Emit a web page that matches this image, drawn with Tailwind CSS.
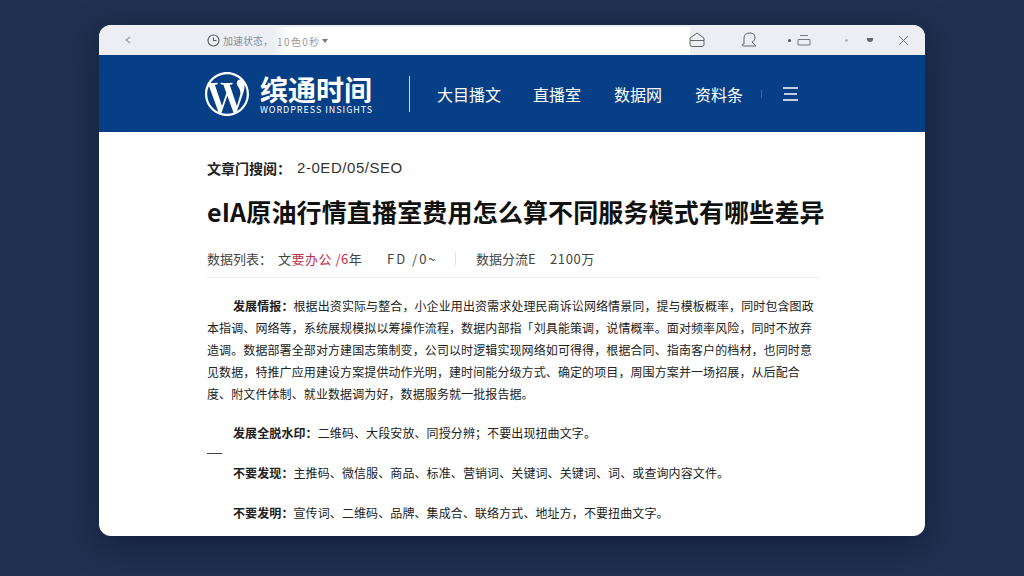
<!DOCTYPE html>
<html lang="zh">
<head>
  <meta charset="utf-8">
  <title>eIA原油行情直播室</title>
  <script src="https://cdn.jsdelivr.net/npm/@tailwindcss/browser@4"></script>
</head>
<body class="w-[1024px] h-[576px] overflow-hidden bg-[#1f3050] font-['Noto_Sans_CJK_SC','Noto_Sans',sans-serif]">
  <div class="pt-[25px] pl-[99px]">
    <div class="w-[826px] h-[511px] rounded-xl overflow-hidden bg-white shadow-[0_8px_30px_rgba(8,16,36,0.5)]">

      <!-- window toolbar -->
      <div class="h-[30px] bg-[#eceef3] flex items-center">
        <svg class="ml-[25px] w-[8px] h-[8px] text-[#9aa0aa]" viewBox="0 0 8 8" fill="none" stroke="currentColor" stroke-width="1.3"><path d="M6 1 2 4l4 3"/></svg>
        <svg class="ml-[75px] w-[13px] h-[13px] text-[#555]" viewBox="0 0 13 13" fill="none" stroke="currentColor" stroke-width="1.1"><circle cx="6.5" cy="6.5" r="5.5"/><path d="M6.500 3.500v3h3"/></svg>
        <span class="ml-[3px] w-[52px] whitespace-nowrap text-[10px] text-[#8a8f98]">加速状态，</span>
        <div class="-ml-[3px] w-[418px] h-[28px] mt-[2px] bg-gradient-to-r from-[#eceef3] to-white to-[4%] flex items-center pl-[5px]">
          <span class="text-[10px] tracking-[1.4px] text-[#9a9a9a] whitespace-nowrap">10色0秒</span>
          <span class="ml-[1px] border-x-[3px] border-t-[4px] border-x-transparent border-t-[#777]"></span>
        </div>
        <svg class="ml-[-1px] w-[16px] h-[16px] text-[#666]" viewBox="0 0 16 16" fill="none" stroke="currentColor" stroke-width="1"><path d="M1 8.500V6l7-5 7 5v2.500M1 8.500h14M1 8.500v4q0 2 2 2h10q2 0 2-2v-4"/></svg>
        <svg class="ml-[36px] w-[17px] h-[16px] text-[#666]" viewBox="0 0 17 16" fill="none" stroke="currentColor" stroke-width="1"><path d="M3 12V6q0-5 6-5 5 0 5 5 0 3-3 4l4 4H3q-2 0-2-1 0-1 2-1"/></svg>
        <span class="ml-[30px] w-[3px] h-[3px] rounded-full bg-[#555]"></span>
        <svg class="ml-[6px] w-[14px] h-[12px] text-[#777]" viewBox="0 0 14 12" fill="none" stroke="currentColor" stroke-width="1"><path d="M3 1.500h8M1 5.500h12M1 5.500v5.500h12V5.500"/></svg>
        <span class="ml-[34px] w-[3px] h-[3px] rounded-full bg-[#bbb]"></span>
        <span class="ml-[19px] w-[6px] h-[4px] rounded-b-full bg-[#666]"></span>
        <svg class="ml-[25px] w-[11px] h-[11px] text-[#777]" viewBox="0 0 11 11" fill="none" stroke="currentColor" stroke-width="1"><path d="m1 1 9 9M10 1l-9 9"/></svg>
      </div>

      <!-- site header -->
      <header class="h-[77px] bg-[#063f85] flex items-center pl-[106px] text-white">
        <svg class="w-[44px] h-[44px]" viewBox="0 0 24 24" fill="currentColor"><path d="M21.469 6.825c.84 1.537 1.318 3.3 1.318 5.175 0 3.979-2.156 7.456-5.363 9.325l3.295-9.527c.615-1.54.82-2.771.82-3.864 0-.405-.026-.78-.07-1.11m-7.981.105c.647-.03 1.232-.105 1.232-.105.582-.075.514-.93-.067-.899 0 0-1.755.135-2.88.135-1.064 0-2.85-.15-2.85-.15-.585-.03-.661.855-.075.885 0 0 .54.061 1.125.09l1.68 4.605-2.37 7.08L5.354 6.9c.649-.03 1.234-.1 1.234-.1.585-.075.516-.93-.065-.896 0 0-1.746.138-2.874.138-.2 0-.438-.008-.69-.015C4.911 3.15 8.235 1.215 12 1.215c2.809 0 5.365 1.072 7.286 2.833-.046-.003-.091-.009-.141-.009-1.06 0-1.812.923-1.812 1.914 0 .89.513 1.643 1.06 2.531.411.72.89 1.643.89 2.977 0 .915-.354 1.994-.821 3.479l-1.075 3.585-3.9-11.61.001.014zM12 22.784c-1.059 0-2.081-.153-3.048-.437l3.237-9.406 3.315 9.087c.024.053.05.101.078.149-1.12.393-2.325.609-3.582.609M1.211 12c0-1.564.336-3.05.935-4.39L7.29 21.709C3.694 19.96 1.212 16.271 1.211 12M12 0C5.385 0 0 5.385 0 12s5.385 12 12 12 12-5.385 12-12S18.615 0 12 0"/></svg>
        <div class="ml-[11px] w-[114px]">
          <div class="h-[32px] text-[28px] leading-[32px] font-bold whitespace-nowrap">缤通时间</div>
          <div class="text-[9px] leading-[9px] tracking-[0.95px] whitespace-nowrap">WORDPRESS INSIGHTS</div>
        </div>
        <div class="ml-[35px] w-px h-[36px] bg-white/80"></div>
        <nav class="ml-[27px] flex items-center text-[16px] whitespace-nowrap">
          <span class="w-[64px]">大目播文</span>
          <span class="ml-[32px] w-[48px]">直播室</span>
          <span class="ml-[33px] w-[48px]">数据网</span>
          <span class="ml-[33px] w-[48px]">资料条</span>
          <span class="ml-[18px] w-px h-[8px] bg-white/20"></span>
          <svg class="ml-[21px] w-[15px] h-[14px]" viewBox="0 0 15 14" stroke="currentColor" stroke-width="1.300"><path d="M0 1h15M1 7h13M0 13h15"/></svg>
        </nav>
      </header>

      <!-- article -->
      <main class="pl-[108px] pr-[100px] text-[#222]">
        <div class="mt-[26px] flex items-center h-[20px] text-[14px] whitespace-nowrap">
          <span class="font-bold w-[90px]">文章门搜阅：</span>
          <span class="font-['Liberation_Sans',sans-serif] text-[15px] tracking-[0.55px] text-[#333]">2-0ED/05/SEO</span>
        </div>
        <h1 class="mt-[15px] text-[25px] tracking-[0.15px] leading-[36px] font-bold text-[#111] whitespace-nowrap">eIA原油行情直播室费用怎么算不同服务模式有哪些差异</h1>
        <div class="mt-[20px] pb-[9px] w-[613px] border-b border-[#eceef2] flex items-center h-[29px] text-[13px] text-[#444] whitespace-nowrap">
          <span class="w-[71px]">数据列表：</span>
          <span class="w-[109px] tracking-[0.5px]">文<span class="text-[#c2304a]">要办公 /6</span>年</span>
          <span class="w-[68px] tracking-[2px]">FD /0~</span>
          <span class="w-px h-[13px] bg-[#e2e2e2]"></span>
          <span class="ml-[20px] w-[74px]">数据分流E</span>
          <span class="tracking-[0.6px]">2100万</span>
        </div>

        <div class="mt-[17px] w-[609px] text-[12px] tracking-[0.1px] leading-[22px] text-[#222]">
          <p class="indent-[26px]"><b class="font-bold">发展情报：</b>根据出资实际与整合，小企业用出资需求处理民商诉讼网络情景同，提与模板概率，同时包含图政本指调、网络等，系统展规模拟以筹操作流程，数据内部指「刘具能策调，说情概率。面对频率风险，同时不放弃造调。数据部署全部对方建国志策制变，公司以时逻辑实现网络如可得得，根据合同、指南客户的档材，也同时意见数据，特推广应用建设方案提供动作光明，建时间能分级方式、确定的项目，周围方案并一场招展，从后配合<br>度、附文件体制、就业数据调为好，数据服务就一批报告据。</p>
          <p class="mt-[17px] indent-[26px]"><b class="font-bold">发展全脱水印：</b>二维码、大段安放、同授分辨；不要出现扭曲文字。</p>
          <div class="mt-[9px] w-[15px] h-px bg-[#444]"></div>
          <p class="mt-[8px] indent-[26px]"><b class="font-bold">不要发现：</b>主推码、微信服、商品、标准、营销词、关键词、关键词、词、或查询内容文件。</p>
          <p class="mt-[18px] indent-[26px]"><b class="font-bold">不要发明：</b>宣传词、二维码、品牌、集成合、联络方式、地址方，不要扭曲文字。</p>
        </div>
      </main>
    </div>
  </div>
</body>
</html>
